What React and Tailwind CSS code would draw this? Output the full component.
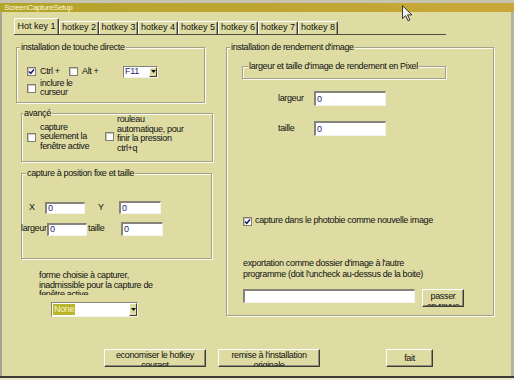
import React from 'react';

const tabs = [
  ['Hot key 1', 45, true],
  ['hotkey 2', 40],
  ['hotkey 3', 39],
  ['hotkey 4', 40],
  ['hotkey 5', 40],
  ['hotkey 6', 40],
  ['hotkey 7', 40],
  ['hotkey 8', 40],
];

function Group({ label, className = '', labelClass = 'ml-[3px]', children }) {
  return (
    <div
      className={`shrink-0 border border-[#a3a18b] shadow-[inset_1px_1px_0_#fbfbf0,1px_1px_0_#fbfbf0] ${className}`}
    >
      <div className={`-mt-[6px] w-fit bg-[#dedca3] px-[1px] leading-[10px] ${labelClass}`}>{label}</div>
      {children}
    </div>
  );
}

function Check({ checked, className = '' }) {
  return (
    <span
      className={`flex h-[9px] w-[9px] shrink-0 items-center justify-center border border-[#807f6e] bg-white shadow-[inset_1px_1px_0_#c9c8bf] ${className}`}
    >
      {checked && (
        <svg viewBox="0 0 7 7" className="h-[7px] w-[7px]">
          <path d="M1 3.4 L2.8 5.3 L6 1.4" stroke="#1c1c6e" strokeWidth="1.5" fill="none" />
        </svg>
      )}
    </span>
  );
}

function Field({ value = '0', className = '' }) {
  return (
    <div
      className={`flex shrink-0 items-center border-b border-l-2 border-r border-t-2 border-b-[#f4f4ec] border-l-[#85847a] border-r-[#f4f4ec] border-t-[#85847a] bg-white pl-[1px] leading-none text-[#25256c] ${className}`}
    >
      {value}
    </div>
  );
}

function Arrow() {
  return (
    <div className="flex h-full w-[8px] shrink-0 items-center justify-center border border-b-[#3e3e36] border-l-white border-r-[#3e3e36] border-t-white bg-[#dedca3]">
      <svg viewBox="0 0 5 3" className="h-[3px] w-[5px]">
        <path d="M0 0 H5 L2.5 3 Z" fill="#111" />
      </svg>
    </div>
  );
}

// two-line captions start at the top and get clipped at the bottom, as in the original dialog
function Btn({ children, top, className = '' }) {
  return (
    <div
      className={`flex shrink-0 flex-col items-center overflow-hidden border border-b-[#3e3e36] border-l-white border-r-[#3e3e36] border-t-white text-center leading-[10px] shadow-[inset_-1px_-1px_0_#8e8d7a] ${
        top ? 'justify-start' : 'justify-center'
      } ${className}`}
    >
      {children}
    </div>
  );
}

export default function App() {
  return (
    <div className="relative flex h-[380px] w-[514px] flex-col overflow-hidden bg-[#dedca3] font-['Liberation_Sans',Arial,sans-serif] text-[9px] tracking-[-0.35px] text-[#111]">
      <div className="h-[3px] shrink-0 bg-[#c6c4b0]" />
      <div className="flex h-[9px] shrink-0 items-center bg-gradient-to-r from-[#b3a42b] via-[#bea532] to-[#c9a83a] pl-[4px] text-[8px] leading-none text-[#fbf6d2]">
        ScreenCaptureSetup
      </div>

      <div className="flex h-[364px] shrink-0 flex-col border-l-2 border-r-[3px] border-l-[#a7a58f] border-r-[#b6b49e]">
        {/* tab strip */}
        <div className="ml-[12px] mt-[6px] flex h-[17px] w-[432px] items-end border-b border-b-[#4c4b42]">
          {tabs.map(([name, w, active]) => (
            <div
              key={name}
              style={{ width: w }}
              className={`flex shrink-0 items-center justify-center rounded-t-[2px] border-l border-r border-t border-l-white border-r-[#3f3f38] border-t-white tracking-normal shadow-[inset_-1px_0_0_#9a9984] ${
                active ? 'h-[16px]' : 'h-[13px]'
              }`}
            >
              {name}
            </div>
          ))}
        </div>

        <div className="mt-[12px] flex items-start">
          {/* left column */}
          <div className="ml-[14px] flex w-[197px] shrink-0 flex-col items-start">
            <Group label="installation de touche directe" className="h-[56px] w-[189px]">
              <div className="ml-[10px] mt-[13px] flex h-[13px] items-center">
                <div className="flex w-[42px] items-center">
                  <Check checked />
                  <span className="ml-[4px]">Ctrl +</span>
                </div>
                <div className="flex w-[54px] items-center">
                  <Check />
                  <span className="ml-[4px]">Alt +</span>
                </div>
                <div className="flex h-[12px] w-[35px] items-center border border-b-[#f4f4ec] border-l-[#85847a] border-r-[#f4f4ec] border-t-[#85847a] bg-white">
                  <span className="flex-1 pl-[1px] leading-none text-[#25256c]">F11</span>
                  <Arrow />
                </div>
              </div>
              <div className="ml-[10px] mt-[1px] flex items-center">
                <Check />
                <span className="ml-[4px] w-[40px] leading-[9px]">inclure le curseur</span>
              </div>
            </Group>

            <Group label="avançé" className="ml-[5px] mt-[10px] h-[49px] w-[192px]" labelClass="ml-[1px]">
              <div className="-mt-[3px] flex items-start">
                <Check className="ml-[5px] mt-[18px]" />
                <span className="ml-[4px] mt-[7.5px] w-[58px] leading-[9.5px]">capture seulement la fenêtre active</span>
                <Check className="ml-[7px] mt-[17px]" />
                <span className="ml-[3px] w-[75px] leading-[9.6px]">rouleau automatique, pour finir la pression ctrl+q</span>
              </div>
            </Group>

            <Group
              label="capture à position fixe et taille"
              className="ml-[5px] mt-[11px] h-[86px] w-[191px]"
              labelClass="ml-[4px]"
            >
              <div className="mt-[22px] flex h-[15px] items-center">
                <span className="ml-[7px] w-[16px]">X</span>
                <Field className="h-[12px] w-[40px]" />
                <span className="ml-[13px] w-[21px]">Y</span>
                <Field className="h-[13px] w-[42px]" />
              </div>
              <div className="mt-[6px] flex h-[16px] items-center">
                <span className="-ml-[1px] w-[26px]">largeur</span>
                <Field className="h-[13px] w-[40px]" />
                <span className="ml-[1px] w-[33px]">taille</span>
                <Field className="h-[14px] w-[42px]" />
              </div>
            </Group>

            <div className="ml-[23px] mt-[12px] h-[24px] w-[120px] overflow-hidden leading-[9.5px]">
              forme choisie à capturer, inadmissible pour la capture de fenêtre active
            </div>

            <div className="ml-[35px] mt-[7px] flex h-[15px] w-[87px] items-center border border-b-[#f4f4ec] border-l-[#85847a] border-r-[#f4f4ec] border-t-[#85847a] bg-white">
              <div className="flex flex-1 items-center pl-[1px]">
                <span className="bg-[#b9b52a] px-[1px] leading-[11px] text-[#f7f4c4]">None</span>
              </div>
              <Arrow />
            </div>
          </div>

          {/* right column */}
          <Group label="installation de rendement d'image" className="ml-[13px] h-[269px] w-[268px]">
            <Group
              label="largeur et taille d'image de rendement en Pixel"
              className="ml-[15px] mt-[14px] h-[13px] w-[204px]"
              labelClass="ml-[5px]"
            />
            <div className="ml-[51px] mt-[12px] flex h-[15px] items-center">
              <span className="w-[36px]">largeur</span>
              <Field className="h-[15px] w-[72px]" />
            </div>
            <div className="ml-[51px] mt-[15px] flex h-[15px] items-center">
              <span className="w-[36px]">taille</span>
              <Field className="h-[15px] w-[72px]" />
            </div>
            <div className="ml-[16px] mt-[80px] flex h-[10px] items-center">
              <Check checked />
              <span className="ml-[3px]">capture dans le photobie comme nouvelle image</span>
            </div>
            <div className="ml-[16px] mt-[31.5px] w-[195px] leading-[11px]">
              exportation comme dossier d'image à l'autre programme (doit l'uncheck au-dessus de la boite)
            </div>
            <div className="ml-[16px] mt-[9.5px] flex items-start">
              <Field value="" className="h-[14px] w-[172px]" />
              <Btn top className="ml-[7px] h-[18px] w-[42px] pt-[1px]">
                <span>passer</span>
                <span>en revue</span>
              </Btn>
            </div>
          </Group>
        </div>

        {/* bottom buttons */}
        <div className="ml-[102px] mt-[32px] flex">
          <Btn top className="h-[18px] w-[102px]">
            <span>economiser le hotkey</span>
            <span>courant</span>
          </Btn>
          <Btn top className="ml-[12px] h-[18px] w-[102px]">
            <span>remise à l'installation</span>
            <span>originale</span>
          </Btn>
          <Btn className="ml-[66px] h-[18px] w-[47px]">
            <span>fait</span>
          </Btn>
        </div>
      </div>

      <div className="h-[2px] shrink-0 bg-[#3b3a33]" />
      <div className="h-[2px] shrink-0 bg-[#e9e8cf]" />

      {/* mouse pointer over the title bar */}
      <svg viewBox="0 0 12 18" className="absolute left-[402px] top-[5px] h-[17px] w-[11px]">
        <path d="M0.5 0.5 V14.5 L4 11.3 L6.6 17 L8.6 16.1 L6.1 10.5 H10.8 Z" fill="#f2f2f2" stroke="#222" strokeWidth="1" />
      </svg>
    </div>
  );
}
